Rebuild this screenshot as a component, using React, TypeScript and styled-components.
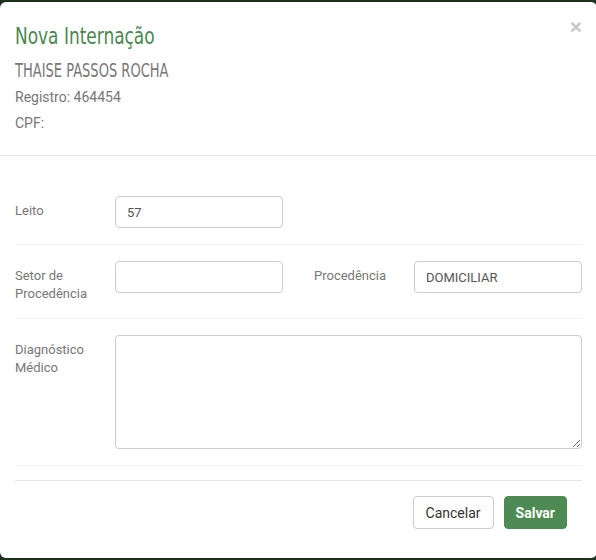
import React from 'react';
import styled, { createGlobalStyle } from 'styled-components';

const GlobalStyle = createGlobalStyle`
  html, body {
    margin: 0;
    padding: 0;
    background: #1d321f;
    overflow: hidden;
  }
  body {
    font-family: Roboto, "Liberation Sans", sans-serif;
    font-size: 13px;
    color: #777;
  }
  * { box-sizing: border-box; }
`;

const Modal = styled.div`
  margin-top: 2px;
  width: 597px;
  height: 556px;
  background: #fff;
  border-radius: 6px;
  display: flex;
  flex-direction: column;
`;

const Header = styled.div`
  display: flex;
  justify-content: space-between;
  align-items: flex-start;
  padding: 18px 15px 21px 15px;
  border-bottom: 1px solid #e5e5e5;
`;

const HeaderInfo = styled.div`
  display: flex;
  flex-direction: column;
  align-items: flex-start;
`;

// condensed display face, squeezed to the width of the original heading font
const Title = styled.h4`
  margin: 0;
  font-family: "DejaVu Sans Condensed", "DejaVu Sans", sans-serif;
  font-weight: normal;
  font-size: 23px;
  line-height: 32px;
  color: #4a8750;
  transform: scaleX(0.82);
  transform-origin: left center;
  white-space: nowrap;
`;

const PatientName = styled.div`
  margin-top: 6px;
  font-family: "DejaVu Sans Condensed", "DejaVu Sans", sans-serif;
  font-size: 20px;
  line-height: 24px;
  color: #777;
  transform: scaleX(0.725);
  transform-origin: left center;
  white-space: nowrap;
`;

const InfoLine = styled.div`
  margin-top: 4px;
  font-size: 14px;
  line-height: 22px;
  color: #777;
`;

const CloseButton = styled.button`
  margin-top: -4px;
  border: none;
  background: none;
  padding: 0;
  font-family: "Liberation Sans", sans-serif;
  font-size: 21px;
  font-weight: bold;
  line-height: 1;
  color: #c8c8c8;
  cursor: pointer;
`;

const Body = styled.div`
  padding: 24px 15px 0;
`;

const Row = styled.div`
  display: grid;
  grid-template-columns: minmax(0, 1fr) minmax(0, 1fr);
  column-gap: 31px;
  padding: 16px 0;
  border-bottom: 1px solid #f0f0f0;
`;

const Field = styled.div<{ $wide?: boolean }>`
  display: flex;
  align-items: flex-start;
  min-width: 0;
  grid-column: ${p => (p.$wide ? '1 / span 2' : 'auto')};
`;

const Label = styled.label`
  flex: 0 0 100px;
  padding-top: 6px;
  line-height: 17.5px;
  font-size: 13px;
  color: #777;
`;

const Input = styled.input`
  flex: 1;
  min-width: 0;
  width: 100%;
  height: 32px;
  padding: 0 11px;
  border: 1px solid #ccc;
  border-radius: 4px;
  font-family: Roboto, sans-serif;
  font-size: 13px;
  color: #555;
  outline: none;
`;

const TextArea = styled.textarea`
  flex: 1;
  min-width: 0;
  height: 114px;
  padding: 6px 11px;
  border: 1px solid #ccc;
  border-radius: 4px;
  font-family: Roboto, sans-serif;
  font-size: 13px;
  color: #555;
  outline: none;
`;

const Footer = styled.div`
  margin: 14px 15px 0;
  padding: 15px 15px 0;
  border-top: 1px solid #e5e5e5;
  display: flex;
  justify-content: flex-end;
  gap: 10px;
`;

const Button = styled.button<{ $primary?: boolean }>`
  height: 33px;
  padding: 0 ${p => (p.$primary ? '11px' : '12px')};
  border-radius: 4px;
  border: 1px solid ${p => (p.$primary ? '#4e8a54' : '#ccc')};
  background: ${p => (p.$primary ? '#4e8a54' : '#fff')};
  color: ${p => (p.$primary ? '#fff' : '#333')};
  font-family: Roboto, sans-serif;
  font-size: 14px;
  font-weight: ${p => (p.$primary ? 'bold' : 'normal')};
  cursor: pointer;
`;

export default function App() {
  return (
    <>
      <GlobalStyle />
      <Modal>
        <Header>
          <HeaderInfo>
            <Title>Nova Internação</Title>
            <PatientName>THAISE PASSOS ROCHA</PatientName>
            <InfoLine>Registro: 464454</InfoLine>
            <InfoLine>CPF:</InfoLine>
          </HeaderInfo>
          <CloseButton aria-label="Fechar">×</CloseButton>
        </Header>
        <Body>
          <Row>
            <Field>
              <Label>Leito</Label>
              <Input defaultValue="57" />
            </Field>
          </Row>
          <Row>
            <Field>
              <Label>Setor de Procedência</Label>
              <Input />
            </Field>
            <Field>
              <Label>Procedência</Label>
              <Input defaultValue="DOMICILIAR" />
            </Field>
          </Row>
          <Row>
            <Field $wide>
              <Label>Diagnóstico Médico</Label>
              <TextArea />
            </Field>
          </Row>
        </Body>
        <Footer>
          <Button>Cancelar</Button>
          <Button $primary>Salvar</Button>
        </Footer>
      </Modal>
    </>
  );
}
